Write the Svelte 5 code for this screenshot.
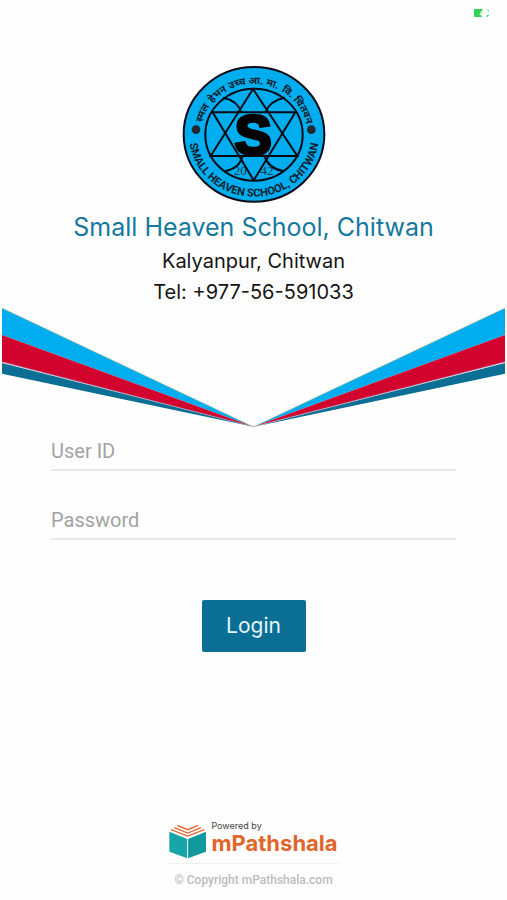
<script>
  let userId = '';
  let password = '';

  // one side of the ribbon, the other one is mirrored
  const stripes = [
    { color: '#00aeef', points: '0,0 252,119 0,27' },
    { color: '#d2042d', points: '0,27 252,119 0,54' },
    { color: '#0b6e94', points: '0,55 252,119 0,66' }
  ];

  // words round the top of the emblem, offset = where the middle of the word sits on the arc
  const words = [
    { text: 'स्मल', offset: '13%' },
    { text: 'हेभन', offset: '27%' },
    { text: 'उच्च', offset: '40%' },
    { text: 'आ.', offset: '51%' },
    { text: 'मा.', offset: '61%' },
    { text: 'वि.', offset: '71%' },
    { text: 'चितवन', offset: '85%' }
  ];
</script>

<div class="page">
  <header class="status">
    <svg width="18" height="10" viewBox="0 0 18 10" aria-hidden="true">
      <path d="M2 1h8L7 5l2 4H2Q1 9 1 8V2Q1 1 2 1z" fill="#34d058" />
      <path d="M10 3l-3 4" stroke="#c4f3cf" stroke-width="2" />
      <path d="M14 1q2 0 2 3l-1-1zM13 9q3 0 3-3l-2 1z" fill="#55d873" />
    </svg>
  </header>

  <main>
    <svg class="emblem" viewBox="-2 0 480 450" role="img" aria-label="School emblem">
      <defs>
        <path id="upper" d="M78 221A160 152 0 0 1 398 221" />
        <path id="lower" d="M43 221A195 186 0 0 0 433 221" />
      </defs>
      <ellipse cx="238" cy="220" rx="211" ry="202" fill="#00adef" stroke="#0a0a14" stroke-width="6" />
      <g fill="none" stroke="#0a0a14" stroke-width="6">
        <ellipse cx="238" cy="221" rx="146" ry="138" />
        <path d="M235 84L368 285H108z" />
        <path d="M114 154H362L237 358z" />
        <path d="M145 110Q188 118 200 154M331 110Q286 118 272 154" />
        <path d="M148 331Q195 323 203 286M328 331Q282 323 270 286" />
      </g>
      <circle cx="64" cy="206" r="13" fill="#25262b" />
      <circle cx="410" cy="206" r="13" fill="#25262b" />
      <text class="letter" x="236" y="279">S</text>
      <text class="year" x="197" y="342">20</text>
      <text class="year" x="277" y="342">42</text>
      {#each words as word}
        <text class="hindi"><textPath href="#upper" startOffset={word.offset}>{word.text}</textPath></text>
      {/each}
      <text class="ring"><textPath href="#lower" startOffset="50%">SMALL HEAVEN SCHOOL, CHITWAN</textPath></text>
    </svg>

    <h1>Small Heaven School, Chitwan</h1>
    <p>Kalyanpur, Chitwan</p>
    <p>Tel: +977-56-591033</p>

    <svg class="ribbon" viewBox="0 0 504 120" aria-hidden="true">
      {#each stripes as stripe}
        <polygon points={stripe.points} fill={stripe.color} />
        <polygon points={stripe.points} fill={stripe.color} transform="translate(504 0) scale(-1 1)" />
      {/each}
      <path d="M0 0L252 119L504 0" fill="none" stroke="#d8c48c" stroke-width="0.6" />
      <path d="M0 54L252 119L504 54" fill="none" stroke="#a9a3c6" stroke-width="0.6" />
    </svg>

    <form on:submit|preventDefault>
      <input type="text" placeholder="User ID" aria-label="User ID" bind:value={userId} />
      <input type="password" placeholder="Password" aria-label="Password" bind:value={password} />
      <button type="submit">Login</button>
    </form>
  </main>

  <footer>
    <div class="brand">
      <svg width="38" height="38" viewBox="0 0 114 114" aria-hidden="true">
        <path d="M1 32L55 54V112L1 92z" fill="#16a5a8" />
        <path d="M111 32L57 54V112L111 92z" fill="#12999e" />
        <path d="M56 53V112" stroke="#fff" stroke-width="2" />
        <g fill="none" stroke="#e4672f" stroke-width="4">
          <path d="M6 26L56 45L106 26" />
          <path d="M16 20L56 36L96 20" />
          <path d="M25 13L56 26L87 13" />
        </g>
      </svg>
      <div class="words">
        <span class="powered">Powered by</span>
        <span class="name">mPathshala</span>
      </div>
    </div>
    <div class="copyright">© Copyright mPathshala.com</div>
  </footer>
</div>

<style>
  :global(body) {
    background: #fefefe;
  }
  .page {
    display: flex;
    flex-direction: column;
    min-height: 100vh;
    box-sizing: border-box;
    padding-bottom: 12px;
    font-family: Inter, Roboto, sans-serif;
  }
  .status {
    display: flex;
    justify-content: flex-end;
    padding: 8px 16px 0;
  }
  .status svg {
    display: block;
  }
  main {
    display: flex;
    flex-direction: column;
    align-items: center;
    flex: 1;
    padding-top: 43px;
  }
  .emblem {
    width: 160px;
    height: 150px;
  }
  .letter {
    font: bold 166px "Liberation Sans", sans-serif;
    text-anchor: middle;
    stroke: #000;
    stroke-width: 10px;
  }
  .year {
    font: 39px "Liberation Serif", serif;
    text-anchor: middle;
    fill: #10364c;
  }
  .hindi {
    font: bold 30px "Noto Sans", "Noto Sans Devanagari", sans-serif;
    text-anchor: middle;
    fill: #10202c;
  }
  .ring {
    font: bold 33px Roboto, "Liberation Sans", sans-serif;
    text-anchor: middle;
    fill: #10202c;
  }
  h1 {
    margin: 0;
    font-size: 25px;
    font-weight: 400;
    line-height: 32px;
    color: #15799f;
  }
  p {
    margin: 0;
    font-size: 20px;
    line-height: 31px;
    color: #151515;
  }
  h1 + p {
    margin-top: 3px;
  }
  .ribbon {
    display: block;
    width: 100%;
    box-sizing: border-box;
    padding: 0 2px;
  }
  form {
    display: flex;
    flex-direction: column;
    align-items: center;
    align-self: stretch;
    padding: 6px 51px 0;
  }
  input {
    width: 100%;
    height: 37px;
    box-sizing: border-box;
    margin-bottom: 32px;
    padding: 0;
    border: 0;
    border-bottom: 2px solid #e9e9e9;
    border-radius: 0;
    outline: none;
    background: transparent;
    font: 20px Roboto, sans-serif;
    color: #333;
  }
  input::placeholder {
    color: #a3a3a3;
    opacity: 1;
  }
  button {
    margin-top: 28px;
    width: 104px;
    height: 52px;
    border: 0;
    border-radius: 2px;
    background: #0b6e94;
    color: #e6f5fb;
    font: 21px Inter, sans-serif;
    cursor: pointer;
  }
  footer {
    display: flex;
    flex-direction: column;
    align-items: center;
  }
  .brand {
    display: flex;
    gap: 4px;
    padding-bottom: 4px;
    border-bottom: 1px solid #efefef;
  }
  .words {
    display: flex;
    flex-direction: column;
  }
  .powered {
    font-size: 9px;
    line-height: 10px;
    color: #444;
  }
  .name {
    font-size: 22px;
    font-weight: 700;
    line-height: 24px;
    color: #e0662b;
  }
  .copyright {
    margin-top: 8px;
    font: 500 12px/16px Roboto, sans-serif;
    color: #bcbcbc;
  }
</style>
